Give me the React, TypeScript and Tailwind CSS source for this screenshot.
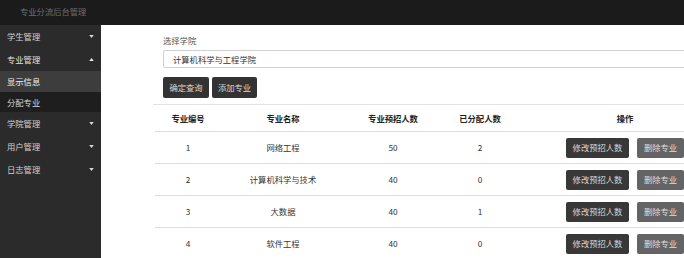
import React from "react";

const Down = () => (
  <svg width="5" height="3" viewBox="0 0 6 4" className="shrink-0">
    <path d="M0 0 L6 0 L3 4 Z" fill="#d8d8d8" />
  </svg>
);
const Up = () => (
  <svg width="5" height="3" viewBox="0 0 6 4" className="shrink-0">
    <path d="M0 4 L6 4 L3 0 Z" fill="#e8e8e8" />
  </svg>
);

const rows = [
  { id: 1, name: "网络工程", plan: 50, assigned: 2 },
  { id: 2, name: "计算机科学与技术", plan: 40, assigned: 0 },
  { id: 3, name: "大数据", plan: 40, assigned: 1 },
  { id: 4, name: "软件工程", plan: 40, assigned: 0 },
];

export default function App() {
  return (
    <div className="w-[684px] h-[258px] overflow-hidden bg-white flex flex-col font-['Noto_Sans_CJK_SC','Noto_Sans',sans-serif] text-[8.3px] leading-[11px]">
      <div className="h-[25px] shrink-0 bg-[#1b1b1b] flex items-center pl-[20px] pb-[3px] text-[8.3px] text-[#6e6e6e]">
        专业分流后台管理
      </div>
      <div className="flex flex-1 min-h-0">
        <div className="w-[101px] shrink-0 bg-[#2b2b2b] text-[#cfcfcf] flex flex-col">
          <div className="h-[23px] flex items-center justify-between pl-[7px] pr-[7px]">
            <span>学生管理</span>
            <Down />
          </div>
          <div className="h-[23px] flex items-center justify-between pl-[7px] pr-[7px] text-[#e0e0e0]">
            <span>专业管理</span>
            <Up />
          </div>
          <div className="h-[21px] flex items-center pl-[7px] bg-[#3d3d3d] text-[#f0f0f0]">
            显示信息
          </div>
          <div className="h-[20px] flex items-center pl-[7px] bg-[#1e1e1e] text-[#d4d4d4]">
            分配专业
          </div>
          <div className="h-[23px] flex items-center justify-between pl-[7px] pr-[7px]">
            <span>学院管理</span>
            <Down />
          </div>
          <div className="h-[23px] flex items-center justify-between pl-[7px] pr-[7px]">
            <span>用户管理</span>
            <Down />
          </div>
          <div className="h-[22px] flex items-center justify-between pl-[7px] pr-[7px]">
            <span>日志管理</span>
            <Down />
          </div>
        </div>
        <div className="flex-1 min-w-0 overflow-hidden pl-[52px]">
          <div className="w-[576px] shrink-0">
            <div className="pl-[10px] pt-[10px] pb-[6px] border-b border-[#e2e2e2]">
              <div className="text-[#555]">选择学院</div>
              <div className="mt-[4px] h-[18px] border border-[#d0d0d0] rounded-[2px] flex items-center pl-[9px] text-[#333]">
                计算机科学与工程学院
              </div>
              <div className="mt-[9px] flex gap-[3px]">
                <div className="h-[21px] w-[46px] bg-[#333] rounded-[2px] flex items-center justify-center text-[#d8d8d8]">
                  确定查询
                </div>
                <div className="h-[21px] w-[45px] bg-[#333] rounded-[2px] flex items-center justify-center text-[#d8d8d8]">
                  添加专业
                </div>
              </div>
            </div>
            <div className="ml-[2px]">
              <div className="grid grid-cols-[66px_124px_96px_78px_212px] h-[26px] items-center text-center font-bold text-[#222]">
                <div>专业编号</div>
                <div>专业名称</div>
                <div>专业预招人数</div>
                <div>已分配人数</div>
                <div>操作</div>
              </div>
              {rows.map((r) => (
                <div
                  key={r.id}
                  className="grid grid-cols-[66px_124px_96px_78px_212px] h-[32px] items-center text-center border-t border-[#dcdcdc] text-[#333]"
                >
                  <div>{r.id}</div>
                  <div>{r.name}</div>
                  <div>{r.plan}</div>
                  <div>{r.assigned}</div>
                  <div className="flex justify-center gap-[8px]">
                    <div className="h-[20px] w-[63px] bg-[#383838] rounded-[2px] flex items-center justify-center text-[#d6d6d6]">
                      修改预招人数
                    </div>
                    <div className="h-[20px] w-[47px] bg-[#646464] rounded-[2px] flex items-center justify-center text-[#dedede]">
                      删除专业
                    </div>
                  </div>
                </div>
              ))}
            </div>
          </div>
        </div>
      </div>
    </div>
  );
}
